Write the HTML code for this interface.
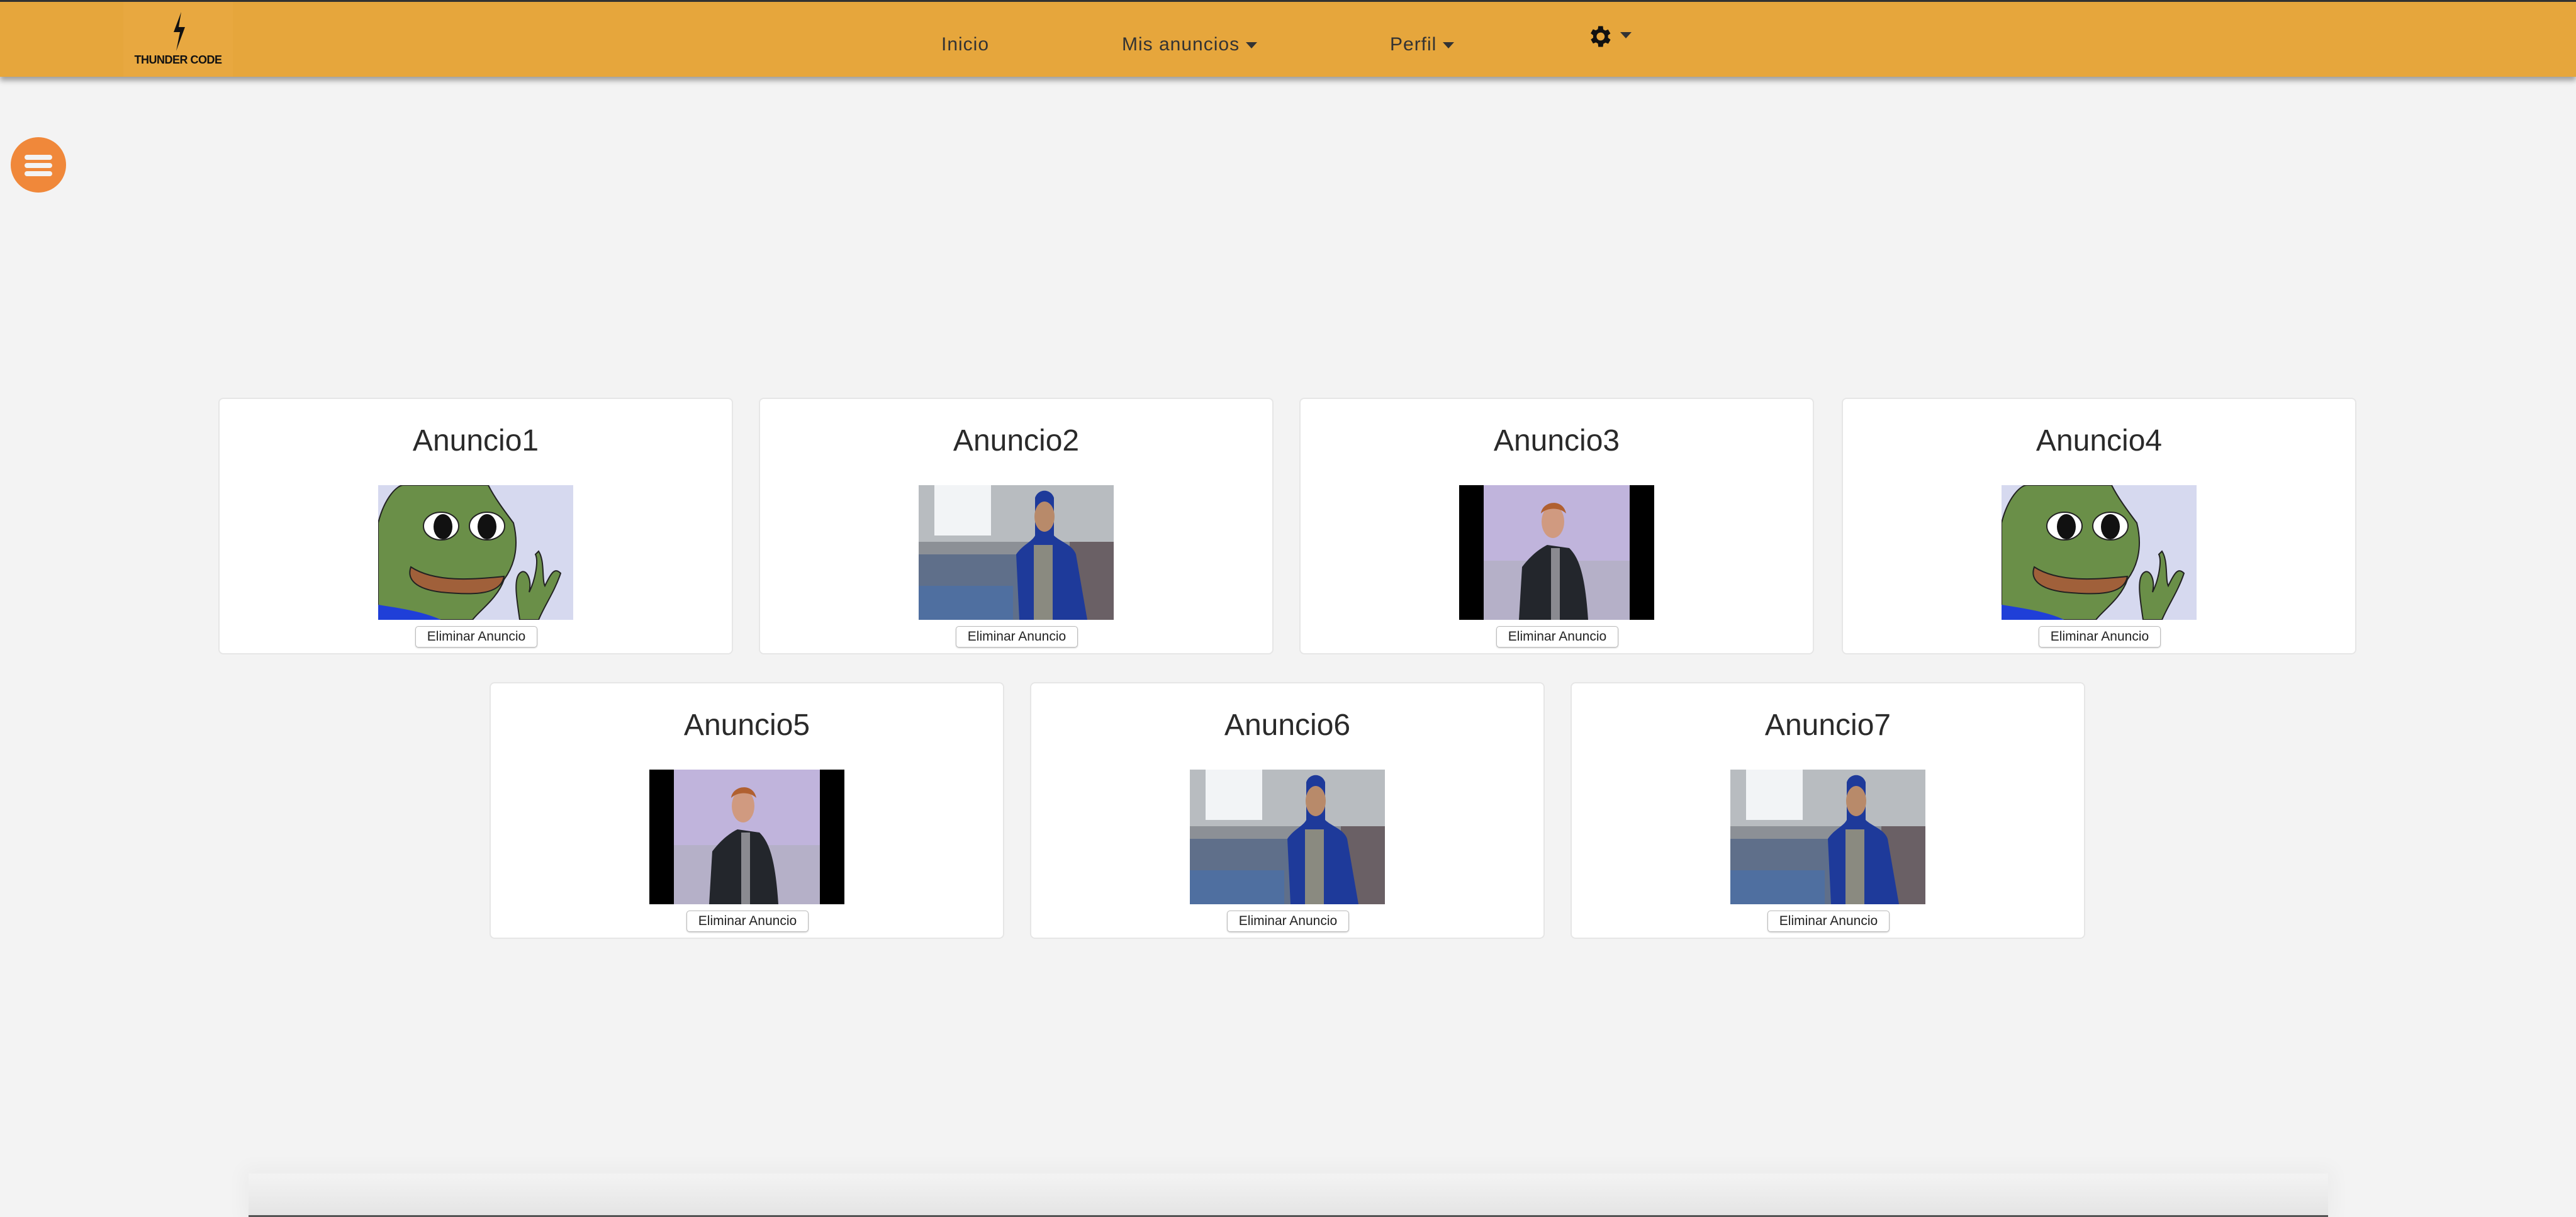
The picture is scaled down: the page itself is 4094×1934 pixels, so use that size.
<!DOCTYPE html>
<html><head><meta charset="utf-8">
<style>
*{margin:0;padding:0;box-sizing:border-box}
body{width:4094px;height:1934px;background:#f3f3f3;font-family:"Liberation Sans",sans-serif;position:relative;overflow:hidden}
.topline{position:absolute;left:0;top:0;width:4094px;height:3px;background:#333}
.nav{position:absolute;left:0;top:3px;width:4094px;height:119px;background:#e6a63c;box-shadow:0 6px 8px rgba(0,0,0,.35)}
.logo{position:absolute;left:196px;top:0;width:174px;height:119px;background:#e8a840}
.logo .t{position:absolute;left:0;width:174px;top:82px;text-align:center;font-size:18px;font-weight:bold;color:#111;letter-spacing:-0.5px}
.ni{position:absolute;top:51px;font-size:30px;color:#333;letter-spacing:1px}
.car{display:inline-block;width:0;height:0;border-left:9px solid transparent;border-right:9px solid transparent;border-top:10px solid #333;vertical-align:middle;margin-left:10px}
.ham{position:absolute;left:17px;top:218px;width:88px;height:88px;border-radius:50%;background:#f0883a}
.ham i{position:absolute;left:22px;width:44px;height:8px;border-radius:4px;background:#f3f3f3}
.card{position:absolute;width:818px;height:408px;background:#fff;border:2px solid #e6e6e6;border-radius:8px}
.card h2{position:absolute;left:0;width:100%;top:39px;text-align:center;font-weight:normal;font-size:48px;color:#2a2a2a}
.card svg{position:absolute;left:252px;top:137px;width:310px;height:214px}
.card .b{position:absolute;left:311px;top:361px;width:194px;height:34px;border:1px solid #bbb;border-radius:5px;background:#fff;box-shadow:0 1px 2px rgba(0,0,0,.2);font-size:21px;color:#222;text-align:center;line-height:32px}
.bot{position:absolute;left:395px;top:1865px;width:3305px;height:69px;background:linear-gradient(#f3f3f3,#e4e4e4);box-shadow:0 0 30px 10px rgba(0,0,0,.03)}
.botl{position:absolute;left:395px;top:1931px;width:3305px;height:3px;background:#555}
</style></head><body>
<svg width="0" height="0" style="position:absolute">
<defs>
<symbol id="pepe" viewBox="0 0 310 214">
<rect width="310" height="214" fill="#d6d9ef"/>
<path d="M0 214V60C10 20 30 0 40 0H175C185 20 200 40 215 60C225 100 215 130 200 150C190 180 160 200 150 214Z" fill="#6a8f48" stroke="#222" stroke-width="2"/>
<path d="M0 190C30 195 70 200 100 214H0Z" fill="#1f3fd8"/>
<ellipse cx="100" cy="65" rx="28" ry="22" fill="#fff" stroke="#222" stroke-width="2"/>
<ellipse cx="173" cy="65" rx="28" ry="22" fill="#fff" stroke="#222" stroke-width="2"/>
<ellipse cx="103" cy="66" rx="15" ry="20" fill="#111"/>
<ellipse cx="173" cy="66" rx="15" ry="20" fill="#111"/>
<path d="M52 130C90 155 150 150 200 145C195 175 150 175 100 170C60 165 45 150 52 130Z" fill="#a0603a" stroke="#222" stroke-width="2"/>
<path d="M225 214C220 180 215 150 225 140C235 130 245 150 240 170C250 150 255 120 250 110L255 105C265 120 260 150 265 160C275 140 280 130 290 140C280 170 265 190 255 214Z" fill="#6a8f48" stroke="#222" stroke-width="2"/>
</symbol>
<symbol id="stad" viewBox="0 0 310 214">
<rect width="310" height="214" fill="#8c9096"/>
<rect x="0" y="0" width="310" height="90" fill="#b8bcc0"/>
<rect x="25" y="0" width="90" height="80" fill="#f2f4f6"/>
<rect x="0" y="110" width="310" height="104" fill="#5f6f8a"/>
<rect x="0" y="160" width="150" height="54" fill="#4f6fa0"/>
<rect x="240" y="90" width="70" height="124" fill="#6a6065"/>
<path d="M160 214L155 110C165 95 180 90 185 80V20C190 5 210 5 215 20V80C225 90 245 95 250 110L268 214Z" fill="#1e3a9a"/>
<rect x="183" y="95" width="30" height="119" fill="#8a8a80"/>
<ellipse cx="200" cy="50" rx="16" ry="24" fill="#b88a6a"/>
</symbol>
<symbol id="rick" viewBox="0 0 310 214">
<rect width="310" height="214" fill="#000"/>
<rect x="39" width="232" height="214" fill="#c0b4dc"/>
<rect x="39" y="120" width="232" height="94" fill="#b5b0c8"/>
<path d="M95 214L100 130C115 110 130 100 140 95L175 100C190 115 200 140 205 214Z" fill="#23262c"/>
<rect x="146" y="100" width="14" height="114" fill="#8a8a90"/>
<ellipse cx="149" cy="58" rx="18" ry="26" fill="#d09a80"/>
<path d="M130 45C132 25 165 20 170 45C160 35 140 35 130 45Z" fill="#b06030"/>
</symbol>
</defs></svg>
<div class="topline"></div>
<div class="nav">
<div class="logo">
<svg style="position:absolute;left:68px;top:16px" width="40" height="62" viewBox="0 0 40 62"><path d="M24 0L12 32H22L16 62L30 24H20Z" fill="#111"/></svg>
<div class="t">THUNDER CODE</div>
</div>
<div class="ni" style="left:1496px">Inicio</div>
<div class="ni" style="left:1783px">Mis anuncios<span class="car"></span></div>
<div class="ni" style="left:2209px">Perfil<span class="car"></span></div>
<svg style="position:absolute;left:2520px;top:33px" width="44" height="44" viewBox="0 0 24 24"><path fill="#111" d="M19.4 13a7.5 7.5 0 000-2l2.1-1.6-2-3.5-2.5 1a7 7 0 00-1.7-1L15 3h-4l-.4 2.7a7 7 0 00-1.7 1l-2.5-1-2 3.5L6.6 11a7.5 7.5 0 000 2l-2.1 1.6 2 3.5 2.5-1a7 7 0 001.7 1L11 21h4l.4-2.7a7 7 0 001.7-1l2.5 1 2-3.5zM13 15.5a3.5 3.5 0 110-7 3.5 3.5 0 010 7z"/></svg>
<span class="car" style="position:absolute;left:2565px;top:48px;border-top-color:#333"></span>
</div>
<div class="ham"><i style="top:28px"></i><i style="top:41px"></i><i style="top:54px"></i></div>

<div class="card" style="left:347px;top:632px"><h2>Anuncio1</h2><svg><use href="#pepe"/></svg><div class="b">Eliminar Anuncio</div></div>
<div class="card" style="left:1206px;top:632px"><h2>Anuncio2</h2><svg><use href="#stad"/></svg><div class="b">Eliminar Anuncio</div></div>
<div class="card" style="left:2065px;top:632px"><h2>Anuncio3</h2><svg><use href="#rick"/></svg><div class="b">Eliminar Anuncio</div></div>
<div class="card" style="left:2927px;top:632px"><h2>Anuncio4</h2><svg><use href="#pepe"/></svg><div class="b">Eliminar Anuncio</div></div>
<div class="card" style="left:778px;top:1084px"><h2>Anuncio5</h2><svg><use href="#rick"/></svg><div class="b">Eliminar Anuncio</div></div>
<div class="card" style="left:1637px;top:1084px"><h2>Anuncio6</h2><svg><use href="#stad"/></svg><div class="b">Eliminar Anuncio</div></div>
<div class="card" style="left:2496px;top:1084px"><h2>Anuncio7</h2><svg><use href="#stad"/></svg><div class="b">Eliminar Anuncio</div></div>

<div class="bot"></div><div class="botl"></div>
</body></html>
